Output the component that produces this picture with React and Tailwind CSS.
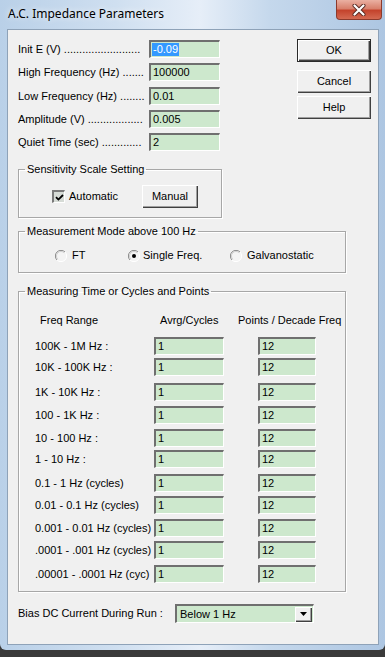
import React from 'react';

const params = [
  { label: 'Init E (V) .........................', value: '-0.09', selected: true, gap: '' },
  { label: 'High Frequency (Hz) .......', value: '100000', gap: 'mt-[5px]' },
  { label: 'Low Frequency (Hz) ........', value: '0.01', gap: 'mt-[6px]' },
  { label: 'Amplitude (V) ..................', value: '0.005', gap: 'mt-[5px]' },
  { label: 'Quiet Time (sec) .............', value: '2', gap: 'mt-[5px]' },
];

const ranges = [
  { label: '100K - 1M Hz :', gap: '' },
  { label: '10K - 100K Hz :', gap: 'mt-[3px]' },
  { label: '1K - 10K Hz :', gap: 'mt-[7px]' },
  { label: '100 - 1K Hz :', gap: 'mt-[5px]' },
  { label: '10 - 100 Hz :', gap: 'mt-[5px]' },
  { label: '1 - 10 Hz :', gap: 'mt-[3px]' },
  { label: '0.1 - 1 Hz (cycles)', gap: 'mt-[6px]' },
  { label: '0.01 - 0.1 Hz (cycles)', gap: 'mt-[4px]' },
  { label: '0.001 - 0.01 Hz (cycles)', gap: 'mt-[5px]' },
  { label: '.0001 - .001 Hz (cycles)', gap: 'mt-[4px]' },
  { label: '.00001 - .0001 Hz (cyc)', gap: 'mt-[6px]' },
];

// sunken edit box with the green background
const Field = ({ value, className = '', selected }) => (
  <div
    className={`h-[18px] flex items-center bg-[#cde8cd] border-solid border-t-2 border-l-2 border-r border-b border-t-[#6f6f6f] border-l-[#6f6f6f] border-r-white border-b-white pl-[1px] leading-[13px] ${className}`}
  >
    {selected ? <span className="bg-[#3399ff] text-white px-[1px]">{value}</span> : <span className="pl-[1px]">{value}</span>}
  </div>
);

const Button = ({ children, isDefault, className = '' }) => (
  <button
    className={`flex items-center justify-center bg-[#f0f0f0] text-[11px] leading-[13px] text-black shadow-[inset_1px_1px_0_#ffffff,inset_-1px_-1px_0_#404040,inset_-2px_-2px_0_#a0a0a0] ${
      isDefault ? 'border border-[#2a2a2a]' : ''
    } ${className}`}
  >
    {children}
  </button>
);

const Radio = ({ checked }) => (
  <svg width="12" height="12" viewBox="0 0 12 12" className="shrink-0">
    <circle cx="6" cy="6" r="5.5" fill="#f4f4f4" />
    <path d="M10 2 A5.6 5.6 0 0 0 2 10" stroke="#8a8a8a" strokeWidth="1" fill="none" />
    <path d="M9.2 2.8 A4.5 4.5 0 0 0 2.8 9.2" stroke="#d0d0d0" strokeWidth="1" fill="none" />
    <path d="M2 10 A5.6 5.6 0 0 0 10 2" stroke="#ffffff" strokeWidth="1" fill="none" />
    {checked && <circle cx="6" cy="6" r="2" fill="#000" />}
  </svg>
);

const Group = ({ title, className = '', children }) => (
  <fieldset className={`ml-[10px] border border-[#a7a7a7] shadow-[1px_1px_0_#ffffff,inset_1px_1px_0_#ffffff] ${className}`}>
    <legend className="ml-[6px] px-[2px] leading-[13px]">{title}</legend>
    {children}
  </fieldset>
);

export default function App() {
  return (
    <div className="w-[385px] h-[657px] flex flex-col bg-[#3a3a3a] font-['Liberation_Sans',Arial,sans-serif] text-[11px] text-black overflow-hidden">
      <div className="h-[650px] flex flex-col rounded-b-[6px] bg-[linear-gradient(to_right,#b9d0e8,#cfdff0_30%,#e6eef8_52%,#c5d8ec_70%,#adc6e2)]">
        {/* title bar */}
        <div className="h-[29px] flex justify-between items-start">
          <span className="ml-[8px] mt-[6px] text-[12px] leading-[16px] font-['Noto_Sans',sans-serif] text-black [text-shadow:0_0_6px_#ffffff]">
            A.C. Impedance Parameters
          </span>
          <div className="mr-[3px] w-[46px] h-[20px] flex items-center justify-center rounded-b-[4px] border border-t-0 border-[#8c3a2c] bg-[linear-gradient(to_bottom,#eab0a2,#d8806c_45%,#c4432c_55%,#d46a52)]">
            <svg width="14" height="12" viewBox="0 0 14 12">
              <path d="M2.5 1.5 L11.5 10.5 M11.5 1.5 L2.5 10.5" stroke="#5a2a22" strokeWidth="4" strokeLinecap="round" />
              <path d="M2.5 1.5 L11.5 10.5 M11.5 1.5 L2.5 10.5" stroke="#ffffff" strokeWidth="2.2" strokeLinecap="round" />
            </svg>
          </div>
        </div>

        {/* client area */}
        <div className="ml-[7px] w-[372px] h-[616px] bg-[#f0f0f0] border border-[#8ea2b8] flex flex-col">
          <div className="flex">
            <div className="pl-[10px] pt-[10px] flex flex-col">
              {params.map((p) => (
                <div key={p.label} className={`flex items-center ${p.gap}`}>
                  <div className="w-[128px] whitespace-nowrap leading-[13px]">{p.label}</div>
                  <Field value={p.value} selected={p.selected} className="ml-[3px] w-[71px]" />
                </div>
              ))}
            </div>
            <div className="ml-auto pr-[7px] pt-[9px] flex flex-col">
              <Button isDefault className="w-[74px] h-[23px]">OK</Button>
              <Button className="mt-[8px] w-[74px] h-[23px]">Cancel</Button>
              <Button className="mt-[3px] w-[74px] h-[23px]">Help</Button>
            </div>
          </div>

          <Group title="Sensitivity Scale Setting" className="mt-[12px] w-[204px]">
            <div className="flex items-center pl-[33px] pt-[9px] pb-[9px]">
              <div className="w-[90px] flex items-center">
                <div className="w-[13px] h-[13px] flex items-center justify-center bg-[#d6dbd6] border-solid border-t-2 border-l-2 border-r border-b border-t-[#7a7a7a] border-l-[#7a7a7a] border-r-white border-b-white">
                  <svg width="9" height="9" viewBox="0 0 9 9">
                    <path d="M1 4.2 L3.4 6.6 L8 2" stroke="#000" strokeWidth="1.8" fill="none" />
                  </svg>
                </div>
                <span className="ml-[4px] leading-[13px]">Automatic</span>
              </div>
              <Button className="w-[56px] h-[23px]">Manual</Button>
            </div>
          </Group>

          <Group title="Measurement Mode above 100 Hz" className="mt-[7px] w-[328px]">
            <div className="flex items-center pl-[36px] pt-[11px] pb-[10px] leading-[13px]">
              <div className="w-[73px] flex items-center gap-[5px]">
                <Radio />
                <span>FT</span>
              </div>
              <div className="w-[102px] flex items-center gap-[3px]">
                <Radio checked />
                <span>Single Freq.</span>
              </div>
              <div className="flex items-center gap-[5px]">
                <Radio />
                <span>Galvanostatic</span>
              </div>
            </div>
          </Group>

          <Group title="Measuring Time or Cycles and Points" className="mt-[12px] w-[328px]">
            <div className="flex flex-col pt-[16px] pb-[8px] leading-[13px]">
              <div className="flex">
                <span className="pl-[21px] w-[141px]">Freq Range</span>
                <span className="w-[78px]">Avrg/Cycles</span>
                <span>Points / Decade Freq</span>
              </div>
              <div className="mt-[10px] flex flex-col">
                {ranges.map((r) => (
                  <div key={r.label} className={`flex items-center ${r.gap}`}>
                    <span className="pl-[16px] w-[135px] whitespace-nowrap">{r.label}</span>
                    <Field value="1" className="w-[70px]" />
                    <Field value="12" className="ml-[34px] w-[58px]" />
                  </div>
                ))}
              </div>
            </div>
          </Group>

          <div className="mt-[12px] pl-[10px] flex items-center">
            <span className="w-[157px] leading-[13px]">Bias DC Current During Run :</span>
            <div className="w-[139px] h-[19px] flex items-center bg-[#cde8cd] border-solid border-t-2 border-l-2 border-r border-b border-t-[#6f6f6f] border-l-[#6f6f6f] border-r-white border-b-white">
              <span className="pl-[3px] leading-[13px] flex-1">Below 1 Hz</span>
              <div className="mr-[1px] w-[17px] h-[15px] flex items-center justify-center bg-[#f0f0f0] shadow-[inset_1px_1px_0_#ffffff,inset_-1px_-1px_0_#404040,inset_-2px_-2px_0_#a0a0a0]">
                <svg width="7" height="4" viewBox="0 0 7 4">
                  <path d="M0 0 L7 0 L3.5 4 Z" fill="#000" />
                </svg>
              </div>
            </div>
          </div>
        </div>
      </div>
    </div>
  );
}
